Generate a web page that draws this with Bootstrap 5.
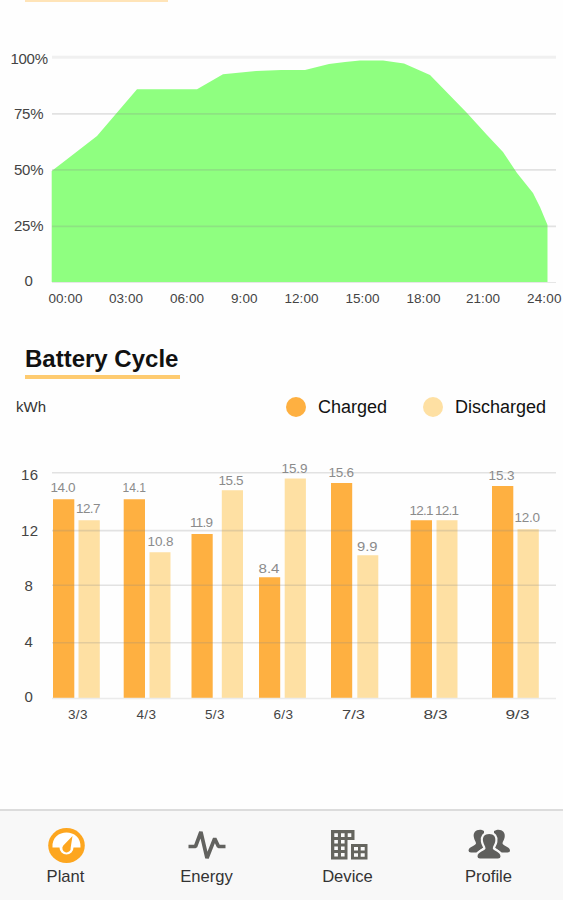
<!DOCTYPE html>
<html lang="en">
<head>
<meta charset="utf-8">
<meta name="viewport" content="width=device-width, initial-scale=1">
<title>Battery Cycle</title>
<link href="https://cdn.jsdelivr.net/npm/bootstrap@5.3.0/dist/css/bootstrap.min.css" rel="stylesheet">
<script src="https://cdn.jsdelivr.net/npm/bootstrap@5.3.0/dist/js/bootstrap.bundle.min.js" defer></script>
<style>
body{font-family:"Liberation Sans",Arial,sans-serif;background:#fefefe;color:#111;height:900px;overflow:hidden}
.prev-line{width:143px;height:2px;margin-left:25px;background:#ffe4b8}
.chart-svg{display:block;width:563px;flex:none}
.cycle-title{font-size:24px;line-height:28px;margin:0 0 0 25px;width:155px;height:34px;border-bottom:4px solid #fecb70;white-space:nowrap}
.legend-row{height:30px;margin-top:13px;padding:0 17px 0 16px;font-size:18px;line-height:28px}
.unit{font-size:15px;color:#333}
.dot{width:20px;height:20px;border-radius:50%;margin-right:12px}
.dot-c{background:#feb041}.dot-d{background:#fee0a3}
.tabs{height:91px;background:#f8f8f8;border-top:2px solid #dcdcdc}
.tab-item{width:141px;color:#333;font-size:16.6px;line-height:20px;padding-top:14px}
.tab-item svg{width:42px;height:40px;display:block;margin-bottom:2px}
.tabs .tab-item:first-child{margin-left:-5px}
.ylab{font-size:15px;fill:#444}
.xlab{font-size:13.5px;fill:#444}
.vlab{font-size:13.5px;fill:#8b8b8b}
</style>
</head>
<body class="d-flex flex-column">
<div class="prev-line flex-shrink-0"></div>
<svg class="chart-svg" height="343" viewBox="0 2 563 343">
  <path d="M52 57.2H556" stroke="#f0f0f0" stroke-width="3"/>
  <path fill="#8fff80" d="M51.700 171L66 160L97 136L137 89.300H197L223 74.300L256 71L281 70H305L329 64L345 62L360 60.500H383L404 63.500L430 75L467 113L487 135L503 152L517 173L533 193L540 207L547.500 225V282H51.700Z"/>
  <path d="M52 113.800H556M52 169.800H556M52 226.300H556" stroke="#888" stroke-opacity=".24" stroke-width="1.800"/>
  <path d="M52 282.500H556" stroke="#e6e6e6"/>
  <g class="ylab">
    <text x="10.500" y="63.500" textLength="37.500">100%</text><text x="14" y="119" textLength="29.500">75%</text><text x="14" y="174.500" textLength="29.500">50%</text><text x="14" y="230.500" textLength="29.500">25%</text><text x="24.500" y="286">0</text>
  </g>
  <g class="xlab">
    <text x="48.500" y="302.500" textLength="34">00:00</text><text x="109" y="302.500" textLength="34">03:00</text><text x="170" y="302.500" textLength="34">06:00</text><text x="231" y="302.500" textLength="26.500">9:00</text><text x="284.500" y="302.500" textLength="34">12:00</text><text x="345.500" y="302.500" textLength="34">15:00</text><text x="406.500" y="302.500" textLength="34">18:00</text><text x="466" y="302.500" textLength="34">21:00</text><text x="527" y="302.500" textLength="34.500">24:00</text>
  </g>
</svg>
<h2 class="cycle-title fw-bold flex-shrink-0">Battery Cycle</h2>
<div class="legend-row d-flex align-items-center flex-shrink-0">
  <span class="unit me-auto">kWh</span>
  <span class="d-flex align-items-center me-4 pe-2"><i class="dot dot-c"></i><span class="pe-1">Charged</span></span>
  <span class="d-flex align-items-center"><i class="dot dot-d"></i>Discharged</span>
</div>
<svg class="chart-svg" height="387" viewBox="0 422 563 387">
  <path fill="#feb041" d="M53 499.300h21.300V698H53zM123.700 499.300H145V698h-21.300zM191.500 534H212.700V698h-21.200zM259 577.300h21.200V698H259zM331 483h21.200V698H331zM410.700 520.300H432V698h-21.300zM492 486h21.300V698H492z"/>
  <path fill="#fee0a3" d="M78.500 520.300h21.300V698H78.500zM149.500 552.300h21V698h-21zM221.800 490.300H243V698h-21.200zM284.700 478.500h21.200V698h-21.200zM357.300 555.300h21V698h-21zM436.500 520.300h21V698h-21zM517.500 529.300h21.300V698h-21.300z"/>
  <path d="M52 472.700H556M52 530.600H556M52 585.300H556M52 642.800H556" stroke="#888" stroke-opacity=".23" stroke-width="1.600"/>
  <path d="M52 698.500H556" stroke="#ebebeb" stroke-width="1.500"/>
  <g class="ylab">
    <text x="21" y="480" textLength="17">16</text><text x="21" y="535.500" textLength="17">12</text><text x="24.500" y="591">8</text><text x="24.500" y="646.500">4</text><text x="24.500" y="702">0</text>
  </g>
  <g class="vlab">
    <text x="50.500" y="492" textLength="25">14.0</text><text x="76" y="513.300" textLength="24.500">12.7</text>
    <text x="122.500" y="492" textLength="23.500" lengthAdjust="spacingAndGlyphs">14.1</text><text x="147.500" y="546" textLength="26">10.8</text>
    <text x="190" y="526.500" textLength="23">11.9</text><text x="218.500" y="484.500" textLength="25">15.5</text>
    <text x="258.500" y="573" textLength="21" lengthAdjust="spacingAndGlyphs">8.4</text><text x="281.500" y="472.500" textLength="26">15.9</text>
    <text x="328.500" y="477" textLength="25.500">15.6</text><text x="357" y="550.500" textLength="20.500" lengthAdjust="spacingAndGlyphs">9.9</text>
    <text x="409.500" y="514.500" textLength="24">12.1</text><text x="435" y="514.500" textLength="24">12.1</text>
    <text x="488.500" y="480" textLength="26">15.3</text><text x="514.500" y="522.300" textLength="25.500">12.0</text>
  </g>
  <g class="xlab">
    <text x="68" y="718.500" textLength="19.500">3/3</text><text x="136.500" y="718.500" textLength="19.500">4/3</text><text x="205" y="718.500" textLength="19.500">5/3</text><text x="273.500" y="718.500" textLength="19.500">6/3</text><text x="342" y="718.500" textLength="23" lengthAdjust="spacingAndGlyphs">7/3</text><text x="423.500" y="718.500" textLength="24" lengthAdjust="spacingAndGlyphs">8/3</text><text x="505.500" y="718.500" textLength="24" lengthAdjust="spacingAndGlyphs">9/3</text>
  </g>
</svg>
<nav class="tabs d-flex flex-shrink-0">
  <div class="tab-item d-flex flex-column align-items-center">
    <svg viewBox="0 0 42 40">
      <ellipse cx="21.500" cy="20.500" rx="18.300" ry="17.500" fill="#fda61f"/>
      <path fill="#fff" d="M7.500 22.500C6 2.500 37 2.500 35.500 22.500H28.500A7 7 0 0 1 14.500 22.500Z"/>
      <path fill="#fda61f" d="M27.500 11L25.700 22.500A4.200 4.200 0 1 1 18.300 20.500Z"/>
    </svg>Plant
  </div>
  <div class="tab-item d-flex flex-column align-items-center">
    <svg viewBox="0 0 42 40"><path fill="none" stroke="#62625f" stroke-width="3.700" stroke-linejoin="bevel" d="M2.500 21.500H9.500L14.900 7L21 33L28.700 13.500L32.500 21.500H39.500"/></svg>Energy
  </div>
  <div class="tab-item d-flex flex-column align-items-center">
    <svg viewBox="0 0 42 40">
      <path fill="#65655f" d="M4 5H27.500V15H20.500V34.500H4ZM24 19H40.500V34.500H24Z"/>
      <path fill="#fbfbfb" d="M7.300 8.300h3.600v3.600H7.300zM14 8.300h3.600v3.600H14zM20.700 8.300h3.600v3.600h-3.600zM7.300 15h3.600v3.600H7.300zM14 15h3.600v3.600H14zM7.300 21.500h3.600v3.600H7.300zM14 21.500h3.600v3.600H14zM7.300 28h3.600v3.600H7.300zM14 28h3.600v3.600H14zM27 22h4v3.600h-4zM33.700 22h4v3.600h-4zM27 28.300h4v3.500h-4zM33.700 28.300h4v3.500h-4z"/>
    </svg>Device
  </div>
  <div class="tab-item d-flex flex-column align-items-center">
    <svg viewBox="0 0 42 40">
      <g fill="#5f5f5d">
        <path d="M14 5C8 4 5 7.500 5.800 12C6.200 15 8 16.500 8 18.500C7.500 21 .8 21.500.5 25.500Q.5 27.500 3 27.500H8.500L16 22V6Z"/>
        <path d="M28.500 5C34 4 37.500 7.500 36.700 12C36.300 15 34.500 16.500 34.500 18.500C35 21 41.700 21.500 42 25.500Q42 27.500 39.500 27.500H33.500L26 22V6Z"/>
        <path stroke="#f8f8f8" stroke-width="4.500" paint-order="stroke" d="M21.200 9C26 9 28 12 27.200 16.500C26.700 19.500 24.800 21 24.800 23.500C25 26 32.500 26.500 32.500 31.500Q32.500 33.500 30 33.500H12Q9.500 33.500 9.500 31.500C9.500 26.500 17.400 26 17.500 23.500C17.500 21 15.600 19.500 15.100 16.500C14.300 12 16.200 9 21.200 9Z"/>
      </g>
    </svg>Profile
  </div>
</nav>
</body>
</html>
